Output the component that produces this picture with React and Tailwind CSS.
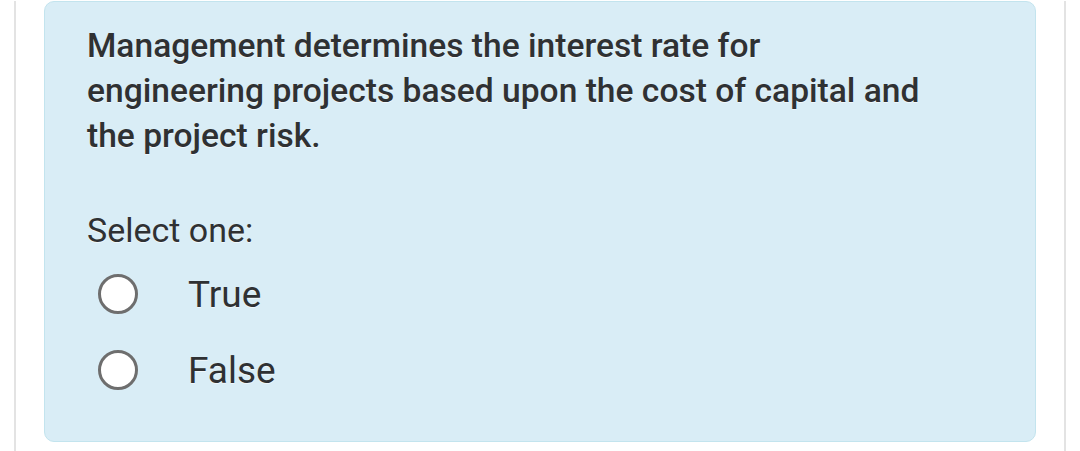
import React from 'react';

const Radio = () => (
  <span className="block w-[40px] h-[40px] rounded-full border-[3px] border-[#6e6e6e] bg-white shrink-0" />
);

const Option = ({ label }) => (
  <label className="flex items-center h-[76px] pl-[53px] text-[37px]">
    <Radio />
    <span className="ml-[50px]">{label}</span>
  </label>
);

export default function App() {
  return (
    <div className="h-[451px] bg-white overflow-hidden">
      <div className="ml-[14px] w-[1052px] h-full border-x-2 border-[#e3e3e3] px-[28px]">
        <div
          className="mt-px h-[441px] rounded-[10px] border border-[#c3e4ee] bg-[#d9edf6] pt-[21px] pl-[42px] text-[34px] leading-[45px] text-[#2f3133] [text-shadow:0_1px_0_rgba(255,255,255,0.6)]"
          style={{ fontFamily: 'Roboto, "Noto Sans", sans-serif' }}
        >
          <p className="max-w-[848px] font-medium text-[33.6px]">
            Management determines the interest rate for engineering projects based upon the cost of capital and the project risk.
          </p>
          <p className="mt-[50px]">Select one:</p>
          <div className="-ml-[42px] mt-[3px]">
            <Option label="True" />
            <Option label="False" />
          </div>
        </div>
      </div>
    </div>
  );
}
